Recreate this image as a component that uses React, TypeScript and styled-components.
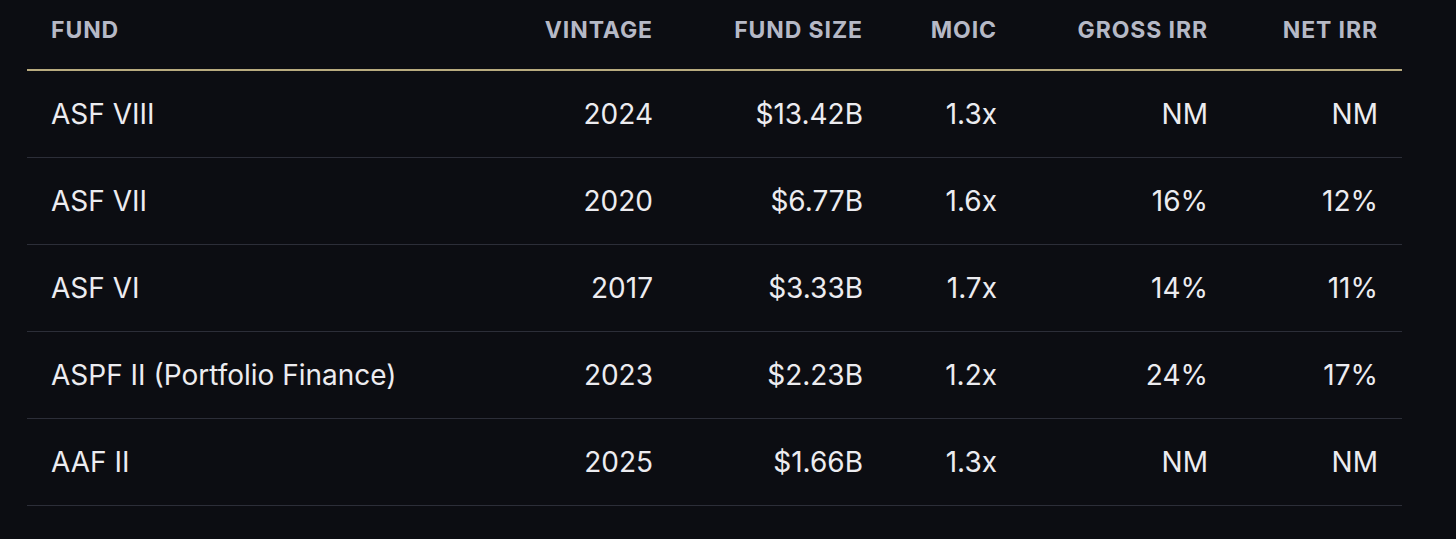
import React from "react";
import styled, { createGlobalStyle } from "styled-components";

const GlobalStyle = createGlobalStyle`
  html, body {
    margin: 0;
    padding: 0;
    background-color: #0c0d12;
  }
  body {
    font-family: Inter, "Noto Sans", "Liberation Sans", sans-serif;
    -webkit-font-smoothing: antialiased;
  }
`;

const Page = styled.div`
  min-height: 539px;
  padding: 0 54px 0 27px;
  background-color: #0c0d12;
`;

const Table = styled.div`
  display: grid;
  grid-template-columns: 1fr 150px 210px 134px 211px 170px;
  width: 100%;
`;

const HeaderCell = styled.div<{ $align?: "left" | "right" }>`
  display: flex;
  align-items: center;
  justify-content: ${({ $align }) => ($align === "left" ? "flex-start" : "flex-end")};
  box-sizing: border-box;
  height: 71px;
  padding: 0 24px 10px;
  border-bottom: 2px solid #b9ab7f;
  color: #b6b9c6;
  font-size: 23px;
  font-weight: 700;
  letter-spacing: 0.9px;
  text-transform: uppercase;
`;

const Cell = styled.div<{ $align?: "left" | "right" }>`
  display: flex;
  align-items: center;
  justify-content: ${({ $align }) => ($align === "left" ? "flex-start" : "flex-end")};
  box-sizing: border-box;
  height: 87px;
  padding: 0 24px;
  border-bottom: 1px solid #2c2e38;
  color: #ececf0;
  font-size: 28px;
  font-weight: 400;
`;

interface FundRow {
  fund: string;
  vintage: string;
  size: string;
  moic: string;
  gross: string;
  net: string;
}

const columns = ["Fund", "Vintage", "Fund Size", "MOIC", "Gross IRR", "Net IRR"];

const rows: FundRow[] = [
  { fund: "ASF VIII", vintage: "2024", size: "$13.42B", moic: "1.3x", gross: "NM", net: "NM" },
  { fund: "ASF VII", vintage: "2020", size: "$6.77B", moic: "1.6x", gross: "16%", net: "12%" },
  { fund: "ASF VI", vintage: "2017", size: "$3.33B", moic: "1.7x", gross: "14%", net: "11%" },
  { fund: "ASPF II (Portfolio Finance)", vintage: "2023", size: "$2.23B", moic: "1.2x", gross: "24%", net: "17%" },
  { fund: "AAF II", vintage: "2025", size: "$1.66B", moic: "1.3x", gross: "NM", net: "NM" },
];

export default function App() {
  return (
    <>
      <GlobalStyle />
      <Page>
        <Table>
          {columns.map((col, i) => (
            <HeaderCell key={col} $align={i === 0 ? "left" : "right"}>
              {col}
            </HeaderCell>
          ))}
          {rows.map((row) => (
            <React.Fragment key={row.fund}>
              <Cell $align="left">{row.fund}</Cell>
              <Cell>{row.vintage}</Cell>
              <Cell>{row.size}</Cell>
              <Cell>{row.moic}</Cell>
              <Cell>{row.gross}</Cell>
              <Cell>{row.net}</Cell>
            </React.Fragment>
          ))}
        </Table>
      </Page>
    </>
  );
}
